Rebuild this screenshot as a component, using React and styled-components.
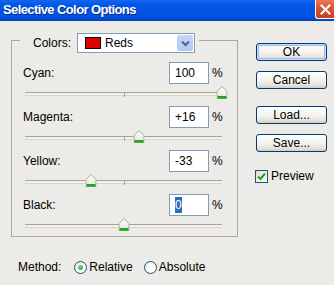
import React from 'react'
import styled, { createGlobalStyle } from 'styled-components'

const channels = [
    { name: 'Cyan', value: 100 },
    { name: 'Magenta', value: 16 },
    { name: 'Yellow', value: -33 },
    { name: 'Black', value: 0, selected: true },
]

const fmt = (v) => (v > 0 && v < 100 ? `+${v}` : `${v}`)

function Thumb() {
    return (
        <svg width="11" height="13" viewBox="0 0 11 13">
            <defs>
                <linearGradient id="tg" x1="0" y1="0" x2="0" y2="1">
                    <stop offset="0" stopColor="#ffffff" />
                    <stop offset="1" stopColor="#e4e3dc" />
                </linearGradient>
            </defs>
            <path d="M0.5 5.5 L5.5 0.5 L10.5 5.5 V12.5 H0.5 Z" fill="url(#tg)" stroke="#8fb08f" />
            <rect x="1" y="10" width="9" height="2.5" fill="#1fa51f" />
        </svg>
    )
}

function App() {
    return (
        <>
            <Global />
            <Window>
                <TitleBar>
                    <Title>Selective Color Options</Title>
                    <CloseButton>
                        <svg width="11" height="11" viewBox="0 0 11 11">
                            <path d="M1.5 1.5 L9.5 9.5 M9.5 1.5 L1.5 9.5" stroke="#fff" strokeWidth="2" strokeLinecap="square" />
                        </svg>
                    </CloseButton>
                </TitleBar>
                <Body>
                    <Main>
                        <Group>
                            <Legend>
                                <LegendLabel>Colors:</LegendLabel>
                                <Select>
                                    <Swatch />
                                    <SelectText>Reds</SelectText>
                                    <DropButton>
                                        <svg width="9" height="7" viewBox="0 0 9 7">
                                            <path d="M1 1.5 L4.5 5 L8 1.5" fill="none" stroke="#4d6185" strokeWidth="2" />
                                        </svg>
                                    </DropButton>
                                </Select>
                            </Legend>
                            {channels.map((c) => (
                                <Channel key={c.name}>
                                    <Header>
                                        <Label>{c.name}:</Label>
                                        <Field>
                                            {c.selected ? <Selected>{fmt(c.value)}</Selected> : fmt(c.value)}
                                        </Field>
                                        <Percent>%</Percent>
                                    </Header>
                                    <Slider>
                                        <Track>
                                            <Tick />
                                            <ThumbWrap style={{ left: `${(c.value + 100) / 2}%` }}>
                                                <Thumb />
                                            </ThumbWrap>
                                        </Track>
                                    </Slider>
                                </Channel>
                            ))}
                        </Group>
                        <MethodRow>
                            <MethodLabel>Method:</MethodLabel>
                            <RadioOption>
                                <Radio checked />
                                Relative
                            </RadioOption>
                            <RadioOption>
                                <Radio />
                                Absolute
                            </RadioOption>
                        </MethodRow>
                    </Main>
                    <Side>
                        <Button primary>OK</Button>
                        <Button>Cancel</Button>
                        <Button spaced>Load...</Button>
                        <Button>Save...</Button>
                        <CheckRow>
                            <Checkbox>
                                <svg width="9" height="9" viewBox="0 0 9 9">
                                    <path d="M1 4.5 L3.5 7 L8 1.5" fill="none" stroke="#21a121" strokeWidth="2" />
                                </svg>
                            </Checkbox>
                            Preview
                        </CheckRow>
                    </Side>
                </Body>
            </Window>
        </>
    )
}

export default App

const Global = createGlobalStyle`
body{
    margin:0;
    background:#ecebe7;
    font-family:"Liberation Sans", Arial, sans-serif;
    font-size:12px;
    color:#000;
}
`

const Window = styled.div`
width:334px;
height:285px;
background:#ecebe7;
overflow:hidden;
`

const TitleBar = styled.div`
height:20px;
display:flex;
align-items:flex-start;
justify-content:space-between;
padding-left:3px;
background:linear-gradient(180deg,#1566f2 0%,#0056e6 25%,#0053e2 80%,#0046cc 100%);
border-bottom:1px solid #0840b0;
`

const Title = styled.div`
color:#fff;
font-weight:bold;
font-size:13px;
letter-spacing:-0.6px;
line-height:19px;
text-shadow:1px 1px 0 #0a2a8c;
`

const CloseButton = styled.div`
width:18px;
height:18px;
display:flex;
align-items:center;
justify-content:center;
background:linear-gradient(180deg,#e97a5a 0%,#d9502e 50%,#c8401f 100%);
border:1px solid #fff;
border-top:none;
border-right:none;
border-radius:0 0 0 3px;
`

const Body = styled.div`
display:flex;
padding:6px 0 0 11px;
`

const Main = styled.div`
width:227px;
`

const Group = styled.fieldset`
margin:0;
min-width:0;
width:227px;
box-sizing:border-box;
padding:9px 12px 0 11px;
border:1px solid #aca899;
`

const Legend = styled.legend`
display:flex;
align-items:center;
padding:6px 4px 0 13px;
margin-left:-3px;
`

const LegendLabel = styled.span`
width:44px;
`

const Select = styled.div`
width:118px;
height:20px;
box-sizing:border-box;
display:flex;
align-items:center;
background:#fff;
border:1px solid #7f9db9;
padding:0 1px 0 7px;
`

const Swatch = styled.div`
width:16px;
height:12px;
box-sizing:border-box;
background:#e00000;
border:1px solid #000;
`

const SelectText = styled.span`
flex:1;
margin-left:4px;
`

const DropButton = styled.div`
width:16px;
height:16px;
display:flex;
align-items:center;
justify-content:center;
background:linear-gradient(180deg,#c6d6fc,#b2c7f5);
border-radius:2px;
`

const Channel = styled.div`
display:flex;
flex-direction:column;
`

const Header = styled.div`
display:flex;
align-items:center;
height:22px;
`

const Label = styled.span`
flex:1;
`

const Field = styled.div`
width:40px;
height:22px;
box-sizing:border-box;
border:1px solid #7f9db9;
background:#fff;
padding:0 5px;
line-height:20px;
`

const Selected = styled.span`
background:#316ac5;
color:#fff;
padding:1px 0;
`

const Percent = styled.span`
margin-left:3px;
width:13px;
`

const Slider = styled.div`
height:22px;
padding:8px 3px 0 2px;
box-sizing:border-box;
${Channel}:last-child &{
    height:20px;
}
`

const Track = styled.div`
position:relative;
height:2px;
background:#f4f2e6;
border-top:1px solid #a4a398;
border-bottom:1px solid #d8d6ca;
`

const Tick = styled.div`
position:absolute;
left:50%;
top:0;
width:1px;
height:4px;
background:#a4a398;
`

const ThumbWrap = styled.div`
position:absolute;
top:-7px;
transform:translateX(-50%);
line-height:0;
`

const MethodRow = styled.div`
display:flex;
align-items:center;
height:16px;
margin-top:22px;
padding-left:7px;
`

const MethodLabel = styled.span`
margin-right:13px;
`

const RadioOption = styled.label`
display:flex;
align-items:center;
gap:2px;
margin-right:11px;
`

const Radio = styled.span`
width:13px;
height:13px;
box-sizing:border-box;
border-radius:50%;
border:1px solid #1c5180;
background:radial-gradient(circle at 60% 60%,#ffffff 40%,#dcdad2 100%);
display:flex;
align-items:center;
justify-content:center;
&::after{
    content:'';
    width:5px;
    height:5px;
    border-radius:50%;
    background:${(p) => (p.checked ? 'radial-gradient(circle at 40% 40%,#6ee06e,#1a9a1a)' : 'transparent')};
}
`

const Side = styled.div`
display:flex;
flex-direction:column;
margin-left:18px;
padding-top:16px;
width:71px;
`

const Button = styled.div`
height:18px;
box-sizing:border-box;
border:1px solid #003c74;
border-radius:3px;
background:linear-gradient(180deg,#ffffff 0%,#f3f2ed 55%,#e3e0d6 85%,#d2ccc0 100%);
display:flex;
align-items:center;
justify-content:center;
margin-top:${(p) => (p.spaced ? '17px' : '10px')};
box-shadow:${(p) => (p.primary ? 'inset 0 0 0 1px #c6d8f8, inset 0 0 0 2px #a0bdf0' : 'none')};
&:first-child{
    margin-top:0;
}
`

const CheckRow = styled.div`
display:flex;
align-items:center;
gap:3px;
margin-top:17px;
margin-left:-1px;
`

const Checkbox = styled.div`
width:13px;
height:13px;
box-sizing:border-box;
border:1px solid #1c5180;
background:linear-gradient(135deg,#dcdcd7,#ffffff);
display:flex;
align-items:center;
justify-content:center;
`
